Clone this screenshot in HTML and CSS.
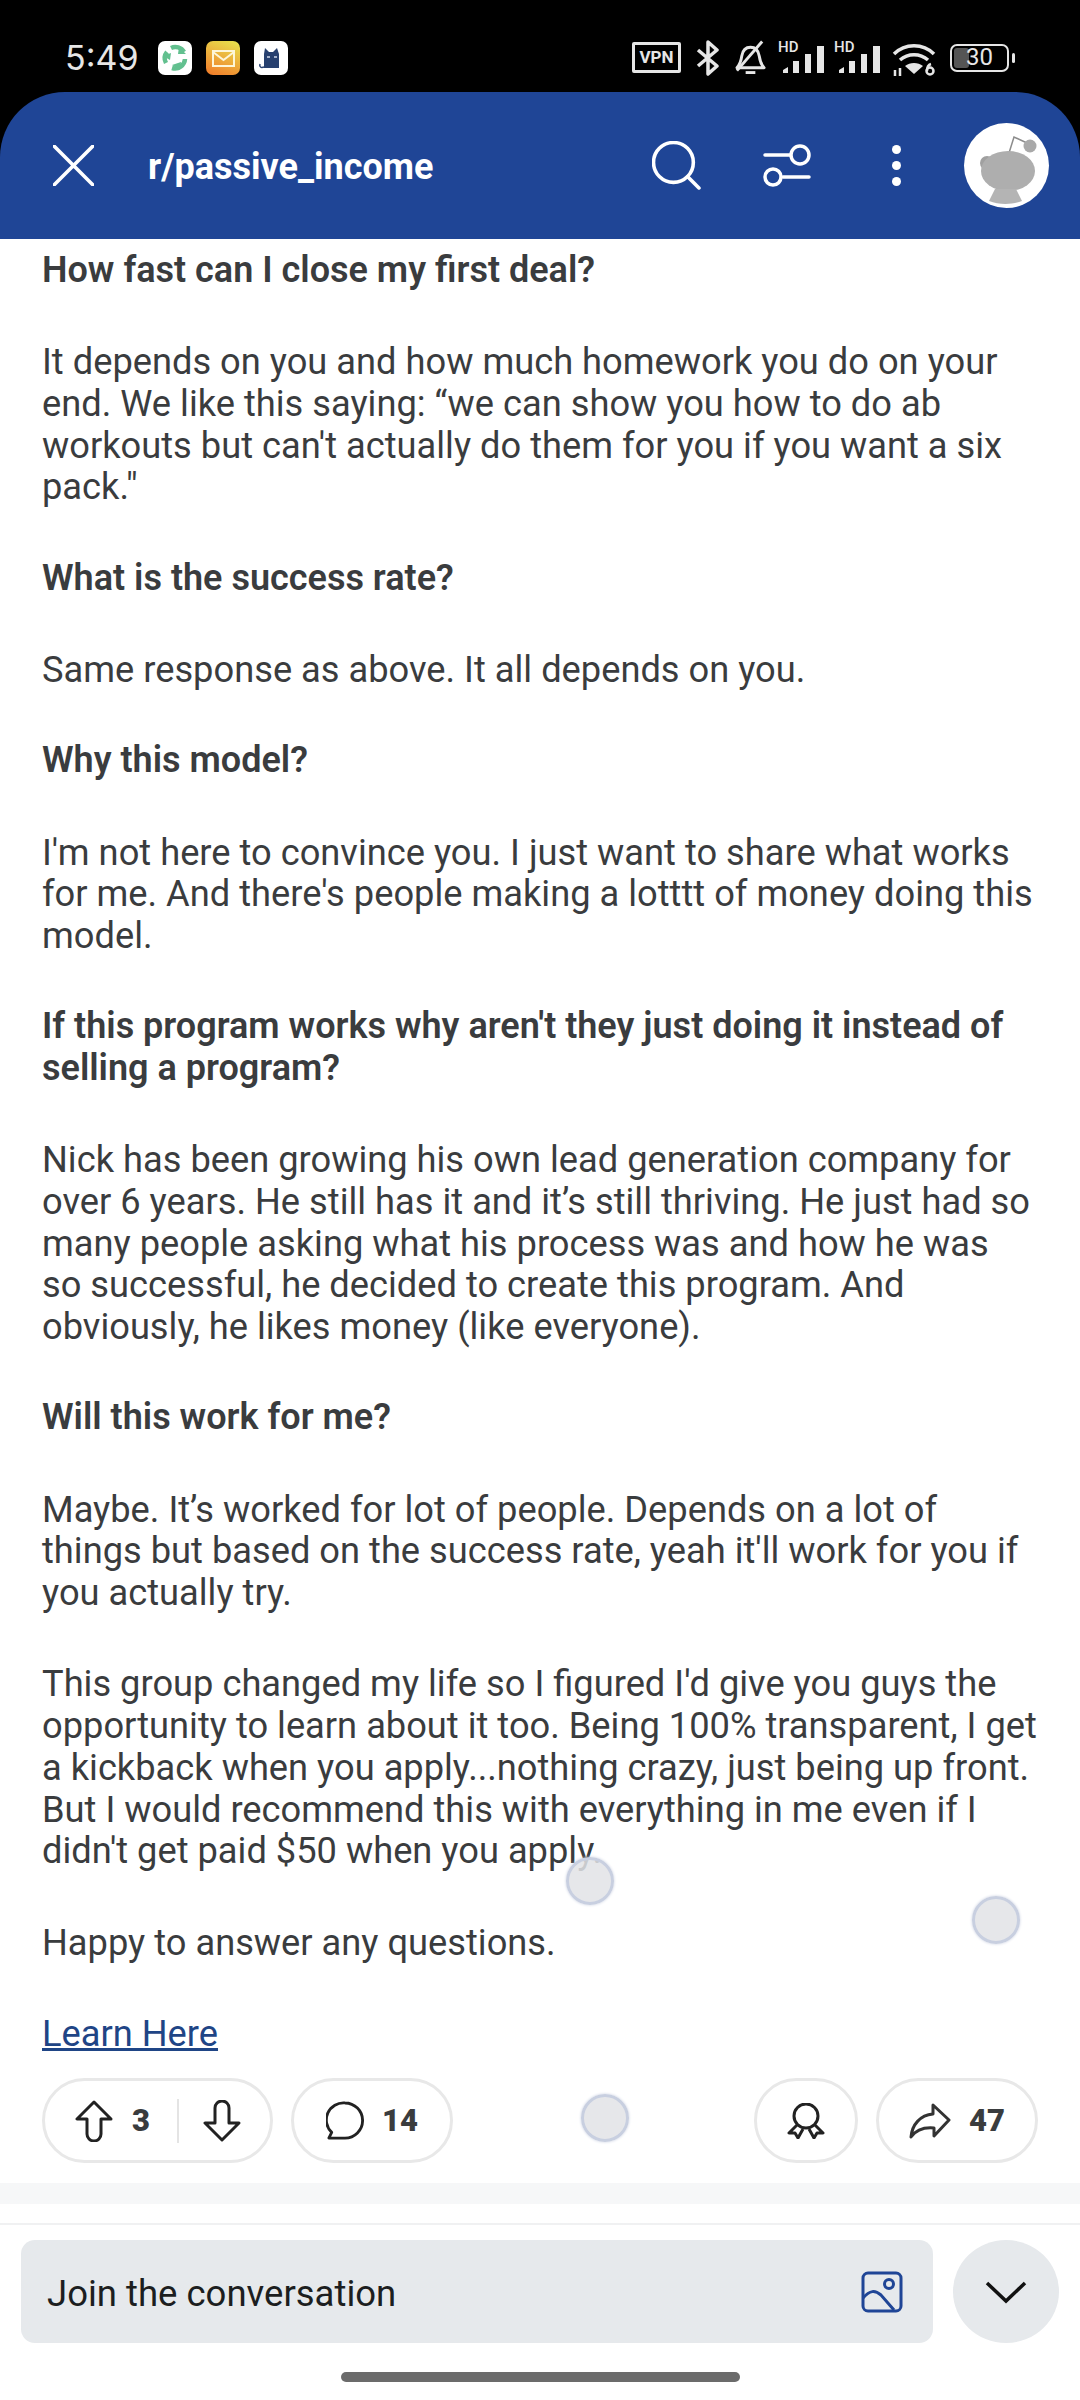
FILE: index.html
```html
<!DOCTYPE html>
<html lang="en">
<head>
	<meta charset="UTF-8">
	<title>r/passive_income</title>
	<link rel="stylesheet" href="styles.css">
</head>
<body>
	<div id="screen">
		<div id="status">
			<span class="time">5:49</span>
			<div class="apps">
				<svg class="app" viewBox="0 0 34 34"><rect width="34" height="34" rx="7" fill="#fff"/><g fill="none" stroke="#62c08f" stroke-width="4.500"><path d="M8 22a10 10 0 0 1 1-11"/><path d="M13 7a10 10 0 0 1 13 4"/><path d="M27 18a10 10 0 0 1-13 9"/></g><path d="M5 15l8-3-1 7zM21 6l7 7-8 0zM22 29l-8-5 9-3z" fill="#62c08f"/></svg>
				<svg class="app" viewBox="0 0 34 34"><defs><linearGradient id="mailbg" x1="0.7" y1="0" x2="0.3" y2="1"><stop offset="0" stop-color="#e8dc4c"/><stop offset="1" stop-color="#f0822c"/></linearGradient></defs><rect width="34" height="34" rx="7" fill="url(#mailbg)"/><g fill="none" stroke="#fdf6d8" stroke-width="2"><rect x="7" y="10" width="21" height="15"/><path d="M7 11l10.500 8 10.500-8"/></g></svg>
				<svg class="app" viewBox="0 0 34 34"><rect width="34" height="34" rx="7" fill="#fff"/><path d="M10 27V13l1-6 4 4h4l4-4 2 6v14z" fill="#27406f"/><path d="M10 26c-3 1-5 0-4-3" fill="none" stroke="#27406f" stroke-width="1.500"/><path d="M13 16h3M20 16h3" stroke="#cfd8ea" stroke-width="1.500"/></svg>
			</div>
			<div class="sys">
				<div class="vpn">VPN</div>
				<svg class="bt" viewBox="0 0 24 36"><path d="M2 10l19 16-9 8V2l9 8L2 26" fill="none" stroke="#e6e6e6" stroke-width="3.500" stroke-linejoin="round"/></svg>
				<svg class="bell" viewBox="0 0 34 36"><path d="M3 28c3-3 4-5 5-12 1-6 4-9 9-9s8 3 9 9c1 7 2 9 5 12z" fill="none" stroke="#e6e6e6" stroke-width="3" stroke-linejoin="round"/><path d="M12 33h10" stroke="#e6e6e6" stroke-width="3"/><path d="M3 31L29 1" stroke="#e6e6e6" stroke-width="3"/></svg>
				<div class="signal">
					<small>HD</small>
					<svg viewBox="0 0 47 30"><path d="M5 30v-3l5-3v6zM15 30V18h6v12zM27 30V11h6v19zM39 30V3h7v27z" fill="#e6e6e6"/></svg>
				</div>
				<div class="signal">
					<small>HD</small>
					<svg viewBox="0 0 47 30"><path d="M5 30v-3l5-3v6zM15 30V18h6v12zM27 30V11h6v19zM39 30V3h7v27z" fill="#e6e6e6"/></svg>
				</div>
				<svg class="wifi" viewBox="0 0 44 36"><g fill="none" stroke="#e6e6e6" stroke-width="3.500"><path d="M2 14c11-11 29-11 40 0"/><path d="M8 20c8-7 20-7 28 0"/></g><path d="M22 34l-9-8c5-4 13-4 18 0z" fill="#e6e6e6"/><path d="M3 30v6M8 28v8" stroke="#e6e6e6" stroke-width="2.500"/><circle cx="38" cy="31" r="3.500" fill="none" stroke="#e6e6e6" stroke-width="2.500"/><path d="M35 31c0-4 1-6 4-7" fill="none" stroke="#e6e6e6" stroke-width="2.500"/></svg>
				<div class="battery"><div class="level"></div><span>30</span></div>
				<div class="nub"></div>
			</div>
		</div>

		<header id="bar">
			<svg class="ic-close" viewBox="0 0 40 40"><path d="M1 1l38 38M39 1L1 39" stroke="#fff" stroke-width="3.500" stroke-linecap="round"/></svg>
			<h1>r/passive_income</h1>
			<svg class="ic-search" viewBox="0 0 48 48"><circle cx="21" cy="21" r="19.500" fill="none" stroke="#fff" stroke-width="3.500"/><path d="M35 35l11 11" stroke="#fff" stroke-width="3.500" stroke-linecap="round"/></svg>
			<svg class="ic-filter" viewBox="0 0 48 44"><g fill="none" stroke="#fff" stroke-width="3.500" stroke-linecap="round"><circle cx="37" cy="11" r="9"/><circle cx="10" cy="33" r="8"/><path d="M2 11h25M20 33h26"/></g></svg>
			<div class="dots"><i></i><i></i><i></i></div>
			<div class="avatar">
				<svg viewBox="0 0 85 85"><path d="M45 30l5-16 13 6" fill="none" stroke="#8c8c8c" stroke-width="1.500"/><circle cx="66" cy="23" r="6.500" fill="#a9a9a9"/><circle cx="23" cy="40" r="7" fill="#a0a0a0"/><ellipse cx="44" cy="48" rx="27" ry="20" fill="#aeaeae"/><path d="M25 78l6-12h21l6 12c-10 4-23 4-33 0z" fill="#b4b4b4"/></svg>
			</div>
		</header>

		<main id="post">
			<div class="text">
				<h3>How fast can I close my first deal?</h3>
				<p>It depends on you and how much homework you do on your end. We like this saying: “we can show you how to do ab workouts but can't actually do them for you if you want a six pack."</p>
				<h3>What is the success rate?</h3>
				<p>Same response as above. It all depends on you.</p>
				<h3>Why this model?</h3>
				<p>I'm not here to convince you. I just want to share what works for me. And there's people making a lotttt of money doing this model.</p>
				<h3>If this program works why aren't they just doing it instead of selling a program?</h3>
				<p>Nick has been growing his own lead generation company for over 6 years. He still has it and it’s still thriving. He just had so many people asking what his process was and how he was<br>so successful, he decided to create this program. And obviously, he likes money (like everyone).</p>
				<h3>Will this work for me?</h3>
				<p>Maybe. It’s worked for lot of people. Depends on a lot of things but based on the success rate, yeah it'll work for you if you actually try.</p>
				<p>This group changed my life so I figured I'd give you guys the opportunity to learn about it too. Being 100% transparent, I get a kickback when you apply...nothing crazy, just being up front. But I would recommend this with everything in me even if I didn't get paid $50 when you apply.</p>
				<p>Happy to answer any questions.</p>
				<p><a href="javascript:;">Learn Here</a></p>
			</div>
			<div class="actions">
				<div class="pill votes">
					<svg class="ic" viewBox="0 0 38 42"><path d="M19 2L2 19h10v15a7 7 0 0 0 14 0V19h10z" fill="none" stroke="#222" stroke-width="3" stroke-linejoin="round"/></svg>
					<b>3</b>
					<span class="sep"></span>
					<svg class="ic" viewBox="0 0 38 42"><path d="M19 40L2 23h10V8a7 7 0 0 1 14 0v15h10z" fill="none" stroke="#222" stroke-width="3" stroke-linejoin="round"/></svg>
				</div>
				<div class="pill comments">
					<svg class="ic" viewBox="0 0 40 42"><path d="M20 2a18 18 0 1 1 0 37H3l3-6A18 18 0 0 1 20 2z" fill="none" stroke="#222" stroke-width="3" stroke-linejoin="round"/></svg>
					<b>14</b>
				</div>
				<div class="spacer"></div>
				<div class="pill award">
					<svg class="ic" viewBox="0 0 38 36"><circle cx="19" cy="13" r="12" fill="none" stroke="#222" stroke-width="3"/><path d="M10 22l-8 8 6 0 3 5 5-9M28 22l8 8-6 0-3 5-5-9" fill="none" stroke="#222" stroke-width="3" stroke-linejoin="round"/></svg>
				</div>
				<div class="pill share">
					<svg class="ic" viewBox="0 0 42 36"><path d="M24 2l16 15-15 16v-8C14 24 7 27 2 34c1-12 9-22 22-23z" fill="none" stroke="#333" stroke-width="3" stroke-linejoin="round"/></svg>
					<b>47</b>
				</div>
			</div>
		</main>

		<div class="band"></div>

		<footer id="reply">
			<div class="input">
				<span>Join the conversation</span>
				<svg viewBox="0 0 42 42"><rect x="2" y="2" width="38" height="38" rx="5" fill="none" stroke="#1f4596" stroke-width="3"/><circle cx="28" cy="13" r="4.500" fill="none" stroke="#1f4596" stroke-width="3"/><path d="M2 27c7-8 12-8 18-3l13 15" fill="none" stroke="#1f4596" stroke-width="3"/></svg>
			</div>
			<div class="collapse">
				<svg viewBox="0 0 42 24"><path d="M2 3l19 18L40 3" fill="none" stroke="#111" stroke-width="3.500"/></svg>
			</div>
		</footer>
		<div id="home"><div></div></div>

		<!-- touch markers from the screen recorder -->
		<div class="touch t1"></div>
		<div class="touch t2"></div>
		<div class="touch t3"></div>
	</div>
</body>
</html>
```

FILE: styles.css
```css
* {
	box-sizing: border-box;
}
html, body {
	margin: 0;
	padding: 0;
}
body {
	background: #fff;
	font-family: Roboto, "Liberation Sans", sans-serif;
}
#screen {
	position: relative;
	display: flex;
	flex-direction: column;
	width: 1080px;
	height: 2400px;
	overflow: hidden;
	background: #000;
}

/* status bar */
#status {
	display: flex;
	flex: none;
	align-items: center;
	height: 92px;
	padding: 23px 65px 0;
	color: #e6e6e6;
}
.time {
	width: 93px;
	font-family: Inter, Roboto, sans-serif;
	font-size: 34px;
	line-height: 40px;
}
.apps {
	display: flex;
	gap: 14px;
}
.app {
	display: block;
	width: 34px;
	height: 34px;
}
.sys {
	display: flex;
	align-items: center;
	margin-left: auto;
}
.vpn {
	width: 49px;
	height: 31px;
	margin-right: 15px;
	border: 3px solid #e6e6e6;
	border-radius: 2px;
	font-size: 17px;
	font-weight: 700;
	line-height: 25px;
	text-align: center;
}
.bt {
	width: 24px;
	height: 36px;
	margin-right: 14px;
}
.bell {
	width: 33px;
	height: 36px;
	margin-right: 11px;
}
.signal {
	position: relative;
	width: 47px;
	height: 36px;
	margin-right: 9px;
}
.signal svg {
	display: block;
	width: 47px;
	height: 30px;
	margin-top: 3px;
}
.signal small {
	position: absolute;
	top: -1px;
	left: 0;
	font-size: 15px;
	font-weight: 500;
	line-height: 16px;
}
.wifi {
	width: 44px;
	height: 36px;
	margin: 0 14px 0 2px;
}
.battery {
	position: relative;
	width: 59px;
	height: 28px;
	border: 2.500px solid #e6e6e6;
	border-radius: 7px;
	font-size: 24px;
	line-height: 23px;
	text-align: center;
}
.battery span {
	position: relative;
}
.level {
	position: absolute;
	top: 2px;
	bottom: 2px;
	left: 2px;
	width: 15px;
	border-radius: 3px;
	background: #555;
}
.nub {
	width: 3px;
	height: 10px;
	margin-left: 3px;
	border-radius: 2px;
	background: #e6e6e6;
}

/* top bar */
#bar {
	display: flex;
	flex: none;
	align-items: center;
	height: 147px;
	padding: 0 31px 0 53px;
	border-radius: 65px 65px 0 0;
	background: #1f4596;
	color: #fff;
}
#bar h1 {
	margin: 2px 0 0 54px;
	font-size: 36px;
	font-weight: 700;
	line-height: 40px;
}
.ic-close {
	width: 41px;
	height: 41px;
}
.ic-search {
	width: 49px;
	height: 49px;
	margin-left: auto;
}
.ic-filter {
	width: 48px;
	height: 44px;
	margin-left: 62px;
}
.dots {
	display: flex;
	flex-direction: column;
	gap: 7px;
	margin: 0 63px 0 81px;
}
.dots i {
	display: block;
	width: 9px;
	height: 9px;
	border-radius: 50%;
	background: #fff;
}
.avatar {
	width: 85px;
	height: 85px;
	border-radius: 50%;
	background: #fff;
	overflow: hidden;
}
.avatar svg {
	display: block;
	width: 85px;
	height: 85px;
}

/* post */
#post {
	flex: 1;
	min-height: 0;
	padding: 11px 42px 0;
	background: #fff;
	color: #3a3c3e;
	font-size: 36.250px;
	line-height: 41.700px;
}
.text h3, .text p {
	margin: 0 0 49.600px;
}
.text h3 {
	font-size: 36px;
	font-weight: 600;
}
.text a {
	color: #1f4586;
	text-decoration: underline;
}
.actions {
	display: flex;
	gap: 18px;
	margin-top: -26px;
}
.spacer {
	flex: 1;
}
.pill {
	display: flex;
	align-items: center;
	justify-content: center;
	height: 85px;
	border: 3px solid #e8e8e8;
	border-radius: 43px;
	color: #3a3c3e;
	font-size: 31px;
	font-weight: 700;
}
.ic {
	display: block;
	width: 38px;
	height: 42px;
}
.votes {
	justify-content: flex-start;
	width: 231px;
	padding-left: 30px;
}
.votes b {
	margin-left: 19px;
}
.sep {
	width: 2px;
	height: 44px;
	margin: 0 24px 0 27px;
	background: #e4e4e4;
}
.comments {
	gap: 18px;
	width: 162px;
}
.award {
	width: 104px;
}
.share {
	gap: 18px;
	width: 162px;
}
.share .ic {
	width: 42px;
	height: 36px;
}
.award .ic {
	width: 38px;
	height: 36px;
}

/* bottom */
.band {
	flex: none;
	height: 21px;
	background: #f6f7f8;
}
#reply {
	display: flex;
	flex: none;
	align-items: stretch;
	gap: 20px;
	height: 139px;
	margin-top: 0;
	padding: 36px 21px 0;
	background: #fff;
	background-image: linear-gradient(#f0f1f2, #f0f1f2);
	background-position: 0 19px;
	background-size: 100% 2px;
	background-repeat: no-repeat;
}
.input {
	display: flex;
	flex: 1;
	align-items: center;
	justify-content: space-between;
	padding: 0 30px 0 26px;
	border-radius: 14px;
	background: #e6e9ec;
	color: #1c1e20;
	font-size: 36.500px;
}
.input span {
	margin-top: 3px;
}
.input svg {
	width: 42px;
	height: 42px;
}
.collapse {
	display: flex;
	flex: none;
	align-items: center;
	justify-content: center;
	width: 106px;
	border-radius: 50%;
	background: #e6e9ec;
}
.collapse svg {
	width: 42px;
	height: 24px;
}
#home {
	display: flex;
	flex: none;
	justify-content: center;
	height: 57px;
	padding-top: 29px;
	background: #fff;
}
#home div {
	width: 399px;
	height: 10px;
	border-radius: 5px;
	background: #6b6b6b;
}

/* touch markers */
.touch {
	position: absolute;
	width: 48px;
	height: 48px;
	border: 3px solid #c8cfe0;
	border-radius: 50%;
	background: rgba(226, 227, 230, .85);
	box-shadow: 0 0 3px #c8cfe0;
}
.t1 {
	top: 1857px;
	left: 566px;
}
.t2 {
	top: 1896px;
	left: 972px;
}
.t3 {
	top: 2094px;
	left: 581px;
}
```
